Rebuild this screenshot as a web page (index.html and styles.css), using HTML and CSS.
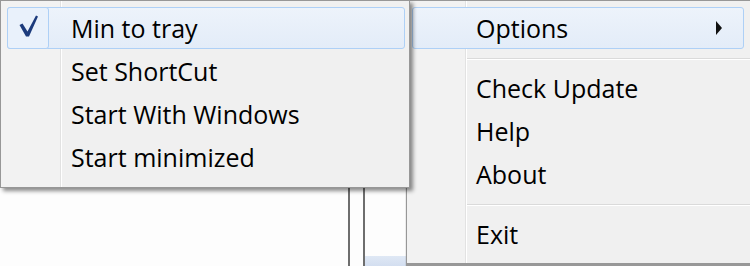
FILE: index.html
```html
<!DOCTYPE html>
<html lang="en">
<head>
    <meta charset="UTF-8">
    <title>Tray Menu</title>
    <link rel="stylesheet" href="styles.css">
</head>
<body>
    <div class="desktop">
        <div class="window-edge edge-one"></div>
        <div class="window-edge edge-two"></div>
        <div class="window-tab"></div>

        <div class="menu main-menu">
            <div class="item active">
                <span class="icon"></span>
                <span class="label">Options</span>
                <svg class="arrow" width="6" height="14" viewBox="0 0 6 14"><path d="M0 0 L6 7 L0 14 Z" fill="#111"/></svg>
            </div>
            <div class="separator"></div>
            <div class="item"><span class="icon"></span><span class="label">Check Update</span></div>
            <div class="item"><span class="icon"></span><span class="label">Help</span></div>
            <div class="item"><span class="icon"></span><span class="label">About</span></div>
            <div class="separator"></div>
            <div class="item"><span class="icon"></span><span class="label">Exit</span></div>
        </div>

        <div class="menu sub-menu">
            <div class="item active">
                <span class="icon checked">
                    <svg width="42" height="42" viewBox="0 0 42 42"><path d="M12.5 18 L15.5 16.5 L20.5 24.5 L29 8.5 L31 9.5 L22 29.5 L19 29.5 Z" fill="#1c3b7c"/></svg>
                </span>
                <span class="label">Min to tray</span>
            </div>
            <div class="item"><span class="icon"></span><span class="label">Set ShortCut</span></div>
            <div class="item"><span class="icon"></span><span class="label">Start With Windows</span></div>
            <div class="item"><span class="icon"></span><span class="label">Start minimized</span></div>
        </div>
    </div>
</body>
</html>
```

FILE: styles.css
```css
html, body {
    margin: 0;
    padding: 0;
}
body {
    width: 750px;
    height: 266px;
    overflow: hidden;
    background: #fdfdfd;
    font-family: 'Open Sans', 'Noto Sans', sans-serif;
    font-size: 25px;
    color: #000;
}
.desktop {
    position: relative;
    width: 750px;
    height: 266px;
}
/* bits of the window sitting behind the popups */
.window-edge {
    position: absolute;
    top: 180px;
    bottom: 0;
    width: 2px;
    background: #6e6e6e;
}
.edge-one { left: 348px; }
.edge-two { left: 363px; }
.window-tab {
    position: absolute;
    left: 365px;
    top: 256px;
    width: 41px;
    height: 10px;
    background: linear-gradient(#dfe8f5, #d3def0);
}
.menu {
    position: absolute;
    top: 0;
    box-sizing: border-box;
    border: 1px solid #979797;
    background-color: #f0f0f0;
}
.sub-menu {
    left: 0;
    width: 410px;
    height: 188px;
    padding: 5px 4px 5px 6px;
    background-image: linear-gradient(to right, #f2f2f2 59px, #e2e2e2 59px, #e2e2e2 60px, #fff 60px, #fff 61px, #f0f0f0 61px);
    box-shadow: 3px 3px 4px rgba(0, 0, 0, 0.45);
    z-index: 2;
}
.main-menu {
    left: 406px;
    width: 346px;
    height: 264px;
    padding: 5px 7px 5px 5px;
    background-image: linear-gradient(to right, #f2f2f2 58px, #e2e2e2 58px, #e2e2e2 59px, #fff 59px, #fff 60px, #f0f0f0 60px);
    box-shadow: 0 2px 1px rgba(0, 0, 0, 0.4);
    z-index: 1;
}
.item {
    position: relative;
    display: flex;
    align-items: center;
    height: 42px;
    margin: 1px 0;
    box-sizing: border-box;
    border: 1px solid transparent;
    border-radius: 3px;
}
.item.active {
    border-color: #aed0f6;
    background: linear-gradient(#edf3fb, #e3ecf8);
}
.icon {
    display: block;
    width: 42px;
    height: 42px;
    margin: -1px 0 0 -1px;
    flex: none;
    box-sizing: border-box;
}
.icon.checked {
    border: 1px solid #aed0f6;
    border-radius: 3px;
    background: #e9f1fb;
}
.icon.checked svg {
    display: block;
    margin: -1px;
}
.label {
    padding-left: 22px;
    line-height: 42px;
    white-space: nowrap;
    margin-top: -1px;
}
.arrow {
    position: absolute;
    right: 21px;
    top: 13px;
}
.separator {
    height: 16px;
    box-sizing: border-box;
    margin-left: 55px;
    margin-right: -7px;
    padding-top: 8px;
}
.separator::before {
    content: "";
    display: block;
    height: 1px;
    background: #dadada;
    border-bottom: 1px solid #fff;
}
```
